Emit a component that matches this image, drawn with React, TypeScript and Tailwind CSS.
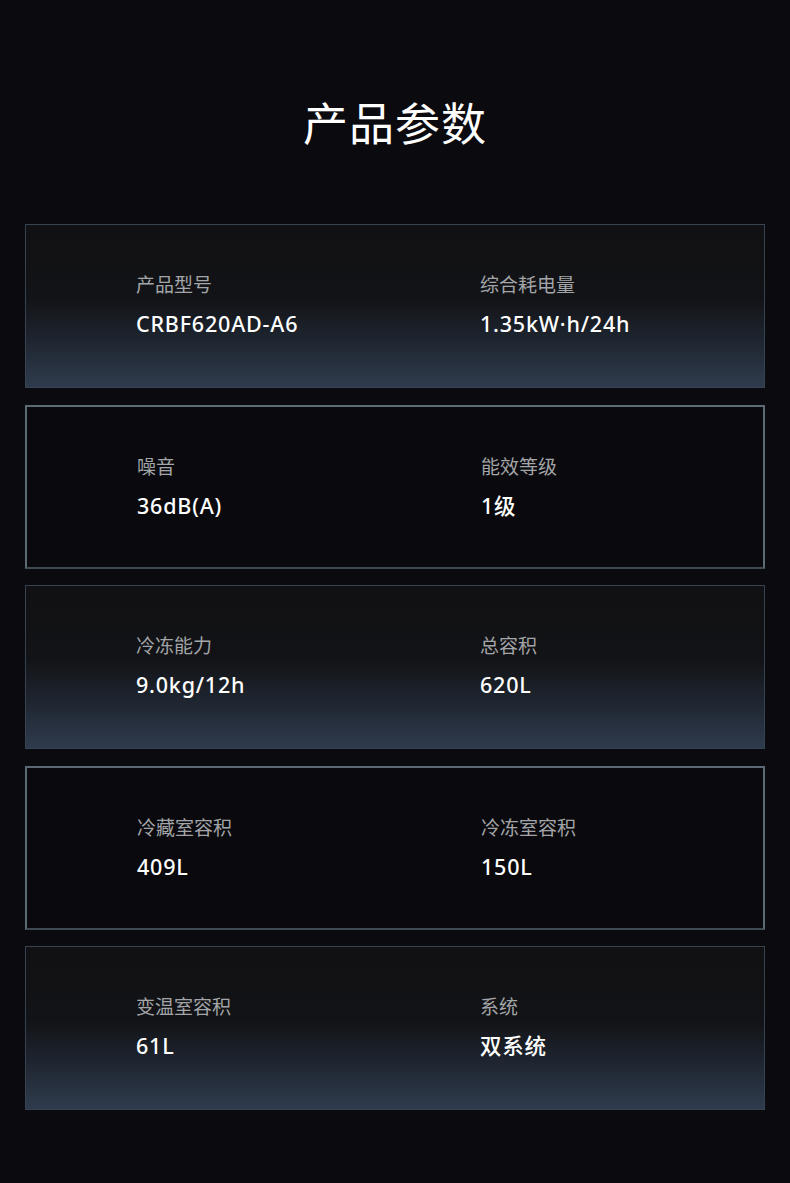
import React from "react";

type Spec = { label: string; value: string };

const rows: [Spec, Spec][] = [
  [
    { label: "产品型号", value: "CRBF620AD-A6" },
    { label: "综合耗电量", value: "1.35kW·h/24h" },
  ],
  [
    { label: "噪音", value: "36dB(A)" },
    { label: "能效等级", value: "1级" },
  ],
  [
    { label: "冷冻能力", value: "9.0kg/12h" },
    { label: "总容积", value: "620L" },
  ],
  [
    { label: "冷藏室容积", value: "409L" },
    { label: "冷冻室容积", value: "150L" },
  ],
  [
    { label: "变温室容积", value: "61L" },
    { label: "系统", value: "双系统" },
  ],
];

const cjk = "font-['Noto_Sans_CJK_SC',sans-serif]";
const latin = "font-['Noto_Sans','Noto_Sans_CJK_SC',sans-serif]";

function SpecCell({ spec }: { spec: Spec }) {
  return (
    <div className="flex flex-col">
      <span className={`${cjk} text-[19px] leading-[24px] text-[#a3a5a8]`}>
        {spec.label}
      </span>
      <span
        className={`${latin} mt-[15px] text-[21.5px] leading-[26px] tracking-[0.8px] font-medium text-white`}
      >
        {spec.value}
      </span>
    </div>
  );
}

function SpecCard({ pair, variant }: { pair: [Spec, Spec]; variant: "glow" | "outline" }) {
  const base =
    variant === "glow"
      ? "border border-[#364452] bg-[linear-gradient(180deg,#111114_0%,#121316_45%,#1f2631_72%,#2f3b4d_100%)]"
      : "border-2 border-[#5b6a74] border-b-[#3e4a52] bg-[#0a0a0e]";
  return (
    <div className={`${base} h-[164px] grid grid-cols-[344px_1fr] pl-[110px] pt-[47px]`}>
      <SpecCell spec={pair[0]} />
      <SpecCell spec={pair[1]} />
    </div>
  );
}

export default function App() {
  return (
    <div className="min-h-[1183px] w-[790px] bg-[#0a0a0f] px-[25px] pt-[92px]">
      <h1 className={`${cjk} text-center text-[45px] leading-[60px] font-normal text-white tracking-[1px]`}>
        产品参数
      </h1>
      <div className="mt-[72px] flex flex-col gap-[16.5px]">
        {rows.map((pair, i) => (
          <SpecCard key={i} pair={pair} variant={i % 2 === 0 ? "glow" : "outline"} />
        ))}
      </div>
    </div>
  );
}
